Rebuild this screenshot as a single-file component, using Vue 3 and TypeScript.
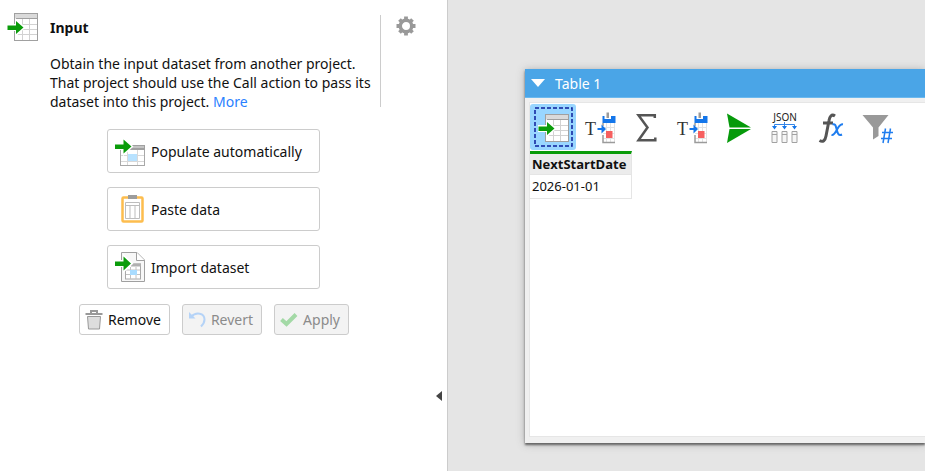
<script setup lang="ts">
import { ref } from 'vue'

interface Source {
  id: string
  label: string
}
interface Tool {
  id: string
  label: string
}

const sources: Source[] = [
  { id: 'populate', label: 'Populate automatically' },
  { id: 'paste', label: 'Paste data' },
  { id: 'import', label: 'Import dataset' },
]

const tools: Tool[] = [
  { id: 'input', label: 'Input' },
  { id: 'convert', label: 'Convert text to dates' },
  { id: 'sum', label: 'Aggregate' },
  { id: 'convert', label: 'Convert text to dates' },
  { id: 'call', label: 'Call' },
  { id: 'json', label: 'Parse JSON' },
  { id: 'formula', label: 'Formula' },
  { id: 'filter', label: 'Filter numbers' },
]

const selected = ref(0)
const columns = ['NextStartDate']
const rows = [['2026-01-01']]
</script>

<template>
  <div class="app">
    <svg class="sprite" aria-hidden="true">
      <symbol id="i-input" viewBox="0 0 32 30">
        <rect x="7.5" y="1.5" width="23" height="27" fill="#fff" stroke="#a0a0a0" />
        <rect x="8" y="2" width="22" height="4" fill="#dadada" />
        <path d="M8 6.5H30" stroke="#a0a0a0" />
        <path d="M8 12.5H30M8 17.5H30M8 22.5H30M15.5 7V28M22.5 7V28" stroke="#d2d2d2" />
        <path d="M0 13H9V8L17 15.5L9 23V18H0Z" fill="#fff" stroke="#fff" stroke-width="2" />
        <path d="M0.5 13.5H9V9L16.5 15.5L9 22V18H0.5Z" fill="#0a9c0a" />
      </symbol>
      <symbol id="i-populate" viewBox="0 0 32 32">
        <rect x="6.5" y="10.5" width="24" height="20" fill="#fff" stroke="#a8a8a8" />
        <rect x="13" y="10" width="18" height="5" fill="#a0a0a0" />
        <rect x="16" y="11" width="14" height="2" fill="#c4c4c4" />
        <path d="M7 20.5H30M7 26.5H30M13.5 15V30M23.5 15V30" stroke="#d8d8d8" />
        <rect x="14" y="19" width="9" height="7" fill="#b8e2ff" />
        <path d="M0 9H10V4L18 11.5L10 19V14H0Z" fill="#fff" stroke="#fff" stroke-width="2" />
        <path d="M1 9.5H9.5V4.5L17.5 11.5L9.5 18.5V14H1Z" fill="#0a9c0a" />
      </symbol>
      <symbol id="i-paste" viewBox="0 0 32 32">
        <rect x="8.5" y="4.5" width="20" height="24" rx="1" fill="#fff" stroke="#fdbd4e" stroke-width="2.5" />
        <rect x="14" y="2" width="9" height="4" fill="#9c9c9c" />
        <path d="M11.5 9.5H25.5V25.5H11.5ZM11.5 12.5H25.500M16 12V25M21 12V25" fill="none" stroke="#bdbdbd" />
      </symbol>
      <symbol id="i-import" viewBox="0 0 32 32">
        <path d="M7.5 1.5H23L30.5 9V30.5H7.5Z" fill="#f8f8f8" stroke="#a0a0a0" />
        <path d="M22.5 1.5V9.5H30.5" fill="#fff" stroke="#a0a0a0" />
        <rect x="11.5" y="13" width="15" height="15" fill="#fff" stroke="#a8a8a8" />
        <rect x="17" y="12.5" width="10" height="3" fill="#b0b0b0" />
        <path d="M12 19H26M12 23.5H26M16.5 16V28M22 16V28" stroke="#c2c2c2" />
        <rect x="16" y="19" width="7" height="5" fill="#a9dcff" />
        <path d="M0 10H10V5L18 12.5L10 20V15H0Z" fill="#fff" stroke="#fff" stroke-width="2" />
        <path d="M1 10.5H9.5V5.5L17 12.5L9.5 19.5V15H1Z" fill="#0a9c0a" />
      </symbol>
      <symbol id="i-convert" viewBox="0 0 34 34">
        <path d="M20 16.5H32M20 22.5H32M20 27.5H32M23.5 12V32M27.5 12V32M31.5 12V32" stroke="#e2e2e2" />
        <path d="M20 12V15M20 24V31.5H32" fill="none" stroke="#9b9b9b" stroke-width="1.5" />
        <path d="M19.5 5H21.5V8H28V5H32.5V12H19.5Z" fill="#1476ea" />
        <path d="M23.500 1.500H26V7H23.500Z" fill="#9b9b9b" />
        <path d="M14.5 17H18.500V13.500L23 18L18.500 22.500V19H14.5Z" fill="#1476ea" />
        <rect x="23" y="20" width="6.5" height="7" fill="#f65f5f" />
      </symbol>
      <symbol id="i-sum" viewBox="0 0 34 34">
        <path d="M25.800 7V4.200H9.500L18.500 16.500L9.500 29.300H26.300V26.500" fill="none" stroke="#555" stroke-width="2.500" />
      </symbol>
      <symbol id="i-call" viewBox="0 0 34 34">
        <path d="M6 2.500L30 16.600H8.500Z" fill="#069a0b" />
        <path d="M8.500 18H30L6 32Z" fill="#069a0b" />
      </symbol>
      <symbol id="i-json" viewBox="0 0 34 34">
        <path d="M17.500 11V17M7.500 17V13.500H27.500V17" fill="none" stroke="#3586e8" />
        <path d="M5 15H10L7.500 18.500ZM15 15H20L17.500 18.500ZM25 15H30L27.500 18.500Z" fill="#1476ea" />
        <path d="M5 20.500H10V31.500H5ZM15 20.500H20V31.500H15ZM25 20.500H30V31.500H25ZM5 23.500H10M15 23.500H20M25 23.500H30" fill="#f6f6f6" stroke="#a2a2a2" />
      </symbol>
      <symbol id="i-formula" viewBox="0 0 34 34">
        <path d="M22 5C18.500 2.500 16.500 6 16 9.500L13 25C12.200 29.500 10 31.500 6.500 29.500M10 12H20" fill="none" stroke="#555" stroke-width="3" />
        <path d="M19.500 13.500C22.500 12.500 22.700 15 23.700 18.500C24.700 22.500 25.500 25 29 23.500M30 13.300C27 13 25.500 16 24 18.500C22.500 21.500 21 24.500 18.500 24" fill="none" stroke="#1f7def" stroke-width="2" />
      </symbol>
      <symbol id="i-filter" viewBox="0 0 34 34">
        <path d="M3.500 4H29.500L19.500 16.500V25L14 28.500V16.500Z" fill="#999" />
        <path d="M23 21.500H34M22 27.500H33M26.500 17.500L24 32M31.500 17.500L29 32" stroke="#1f7def" stroke-width="1.500" />
      </symbol>
      <symbol id="i-remove" viewBox="0 0 18 20">
        <path d="M6 3V1H12V3M0.5 4H17.5" fill="none" stroke="#999" stroke-width="2" />
        <path d="M2.5 6.5H15.5L14.5 19H3.5Z" fill="#ddd" stroke="#999" />
      </symbol>
      <symbol id="i-revert" viewBox="0 0 18 20">
        <path d="M3 7C8 1.500 16.500 3 16.500 9.500C16.500 12.500 15 14.500 13 16.500" fill="none" stroke="#b5d3f7" stroke-width="2" />
        <path d="M1 2V8.500H7.500Z" fill="#b5d3f7" />
      </symbol>
      <symbol id="i-apply" viewBox="0 0 18 20">
        <path d="M1.5 9.5L6.5 14L16 4.5" fill="none" stroke="#a3d9a6" stroke-width="4" />
      </symbol>
      <symbol id="i-gear" viewBox="0 0 20 20">
        <circle cx="10" cy="10" r="5.700" fill="none" stroke="#999" stroke-width="3.400" />
        <path d="M10 0.500V4M10 16V19.500M0.500 10H4M16 10H19.500M3.500 3.500L5.500 5.500M14.500 14.500L16.500 16.500M3.500 16.500L5.500 14.500M14.500 5.500L16.500 3.500" stroke="#999" stroke-width="3.800" />
      </symbol>
    </svg>

    <aside class="panel">
      <header class="head">
        <svg class="head-icon"><use href="#i-input" /></svg>
        <div class="intro">
          <h1>Input</h1>
          <p>
            Obtain the input dataset from another project. That project should use the Call action
            to pass its dataset into this project. <a href="#more">More</a>
          </p>
        </div>
        <button class="gear" aria-label="Settings"><svg><use href="#i-gear" /></svg></button>
      </header>
      <div class="sources">
        <button v-for="s in sources" :key="s.id" class="source">
          <svg><use :href="`#i-${s.id}`" /></svg>{{ s.label }}
        </button>
      </div>
      <div class="actions">
        <button><svg><use href="#i-remove" /></svg>Remove</button>
        <button disabled><svg><use href="#i-revert" /></svg>Revert</button>
        <button disabled><svg><use href="#i-apply" /></svg>Apply</button>
      </div>
      <button class="collapse" aria-label="Collapse panel">
        <svg viewBox="0 0 6 10"><path d="M6 0V10L0 5Z" fill="#444" /></svg>
      </button>
    </aside>

    <main class="canvas">
      <section class="window">
        <h2 class="titlebar">
          <svg viewBox="0 0 14 8"><path d="M0 0H14L7 8Z" fill="#fff" /></svg>Table 1
        </h2>
        <div class="content">
          <div class="toolbar">
            <button
              v-for="(t, i) in tools"
              :key="i"
              :class="{ selected: i === selected }"
              :aria-label="t.label"
              @click="selected = i"
            >
              <svg viewBox="0 0 46 46">
                <rect v-if="i === selected" class="focus" x="5" y="4" width="37" height="38" />
                <use v-if="t.id === 'input'" href="#i-input" x="8" y="9" width="32" height="30" />
                <use v-else :href="`#i-${t.id}`" x="7" y="7" width="34" height="34" />
                <text v-if="t.id === 'convert'" x="9" y="31" class="serif-t">T</text>
                <text v-if="t.id === 'json'" x="25" y="17" text-anchor="middle" class="json-t">JSON</text>
              </svg>
            </button>
          </div>
          <table>
            <thead>
              <tr><th v-for="c in columns" :key="c">{{ c }}</th></tr>
            </thead>
            <tbody>
              <tr v-for="(r, i) in rows" :key="i"><td v-for="v in r" :key="v">{{ v }}</td></tr>
            </tbody>
          </table>
        </div>
      </section>
    </main>
  </div>
</template>

<style>
body {
  overflow: hidden;
}
</style>

<style scoped>
.app {
  display: flex;
  min-height: 100vh;
  font: 14px/19px "Noto Sans", "Open Sans", sans-serif;
  color: #111;
  background: #e5e5e5;
}
* {
  box-sizing: border-box;
}
.sprite {
  position: absolute;
  width: 0;
  height: 0;
}
button {
  font: inherit;
  color: inherit;
  padding: 0;
  border: 0;
  background: none;
}
.panel {
  position: relative;
  flex: 0 0 448px;
  background: #fff;
  border-right: 1px solid #ccc;
}
.head {
  display: flex;
  align-items: flex-start;
  padding: 12px 0 0 7px;
}
.head-icon {
  flex: none;
  width: 32px;
  height: 30px;
}
.intro {
  width: 331px;
  margin: 3px 0 0 11px;
  height: 92px;
  border-right: 1px solid #ccc;
}
h1 {
  margin: 0;
  padding-top: 3px;
  font-size: 14px;
  line-height: 19px;
}
p {
  margin: 17px 0 0;
}
a {
  color: #2a7fff;
  text-decoration: none;
}
.gear {
  margin: 4px 0 0 15px;
  height: 20px;
}
.gear svg {
  display: block;
  width: 20px;
  height: 20px;
}
.sources {
  display: grid;
  justify-content: center;
  grid-template-columns: 213px;
  gap: 14px;
  padding: 22px 20px 15px 0;
}
.source,
.actions button {
  display: flex;
  align-items: center;
  border: 1px solid #ccc;
  border-radius: 3px;
  background: #fff;
}
.source {
  height: 44px;
  padding-left: 6px;
  gap: 5px;
}
.source svg {
  width: 32px;
  height: 32px;
}
.actions {
  display: flex;
  gap: 12px;
  padding-left: 79px;
}
.actions button {
  height: 31px;
  padding: 0 8px 0 5px;
  gap: 5px;
}
.actions svg {
  width: 18px;
  height: 20px;
}
.actions button:disabled {
  color: #8b8b8b;
  background: #f3f3f3;
}
.collapse {
  position: absolute;
  right: 5px;
  top: 391px;
  width: 6px;
  height: 10px;
}
.collapse svg {
  display: block;
}
.canvas {
  flex: 1;
  min-width: 0;
  padding: 69px 0 28px 77px;
  display: flex;
}
.window {
  flex: 1;
  min-width: 0;
  display: flex;
  flex-direction: column;
  background: #f0f0f0;
  box-shadow: 0 2px 2px #666, 0 1px 8px #aaa;
}
.titlebar {
  display: flex;
  align-items: center;
  gap: 10px;
  height: 29px;
  margin: 0;
  padding-left: 6px;
  font-size: 14px;
  font-weight: 400;
  color: #fff;
  background: #4aa5e7;
  border-bottom: 1px solid #6bb9ef;
}
.titlebar svg {
  width: 14px;
  height: 8px;
}
.content {
  flex: 1;
  margin: 4px 0 6px 4px;
  border: 1px solid #e6e6e6;
  border-right: 0;
  background: #fff;
}
.toolbar {
  display: flex;
  padding-top: 1px;
}
.toolbar button {
  width: 46px;
  height: 46px;
}
.toolbar svg {
  display: block;
  width: 46px;
  height: 46px;
}
.toolbar .selected {
  background: #99d6ff;
  border-radius: 3px;
}
.focus {
  fill: none;
  stroke: #0c1f9c;
  stroke-width: 1.5;
  stroke-dasharray: 4 2;
}
.serif-t {
  font: 18px "Liberation Serif", serif;
  fill: #333;
}
.json-t {
  font: 10px "Noto Sans", sans-serif;
  fill: #222;
}
table {
  margin-top: 1px;
  border-collapse: separate;
  border-spacing: 0;
  font-size: 13px;
}
th,
td {
  padding: 0 5px 0 2px;
  text-align: left;
  border-right: 1px solid #e5e5e5;
  border-bottom: 1px solid #e5e5e5;
}
th {
  height: 24px;
  font-family: "Open Sans", "Noto Sans", sans-serif;
  border-top: 3px solid #0a9c0a;
  background: #ececec;
}
td {
  height: 24px;
}
</style>
